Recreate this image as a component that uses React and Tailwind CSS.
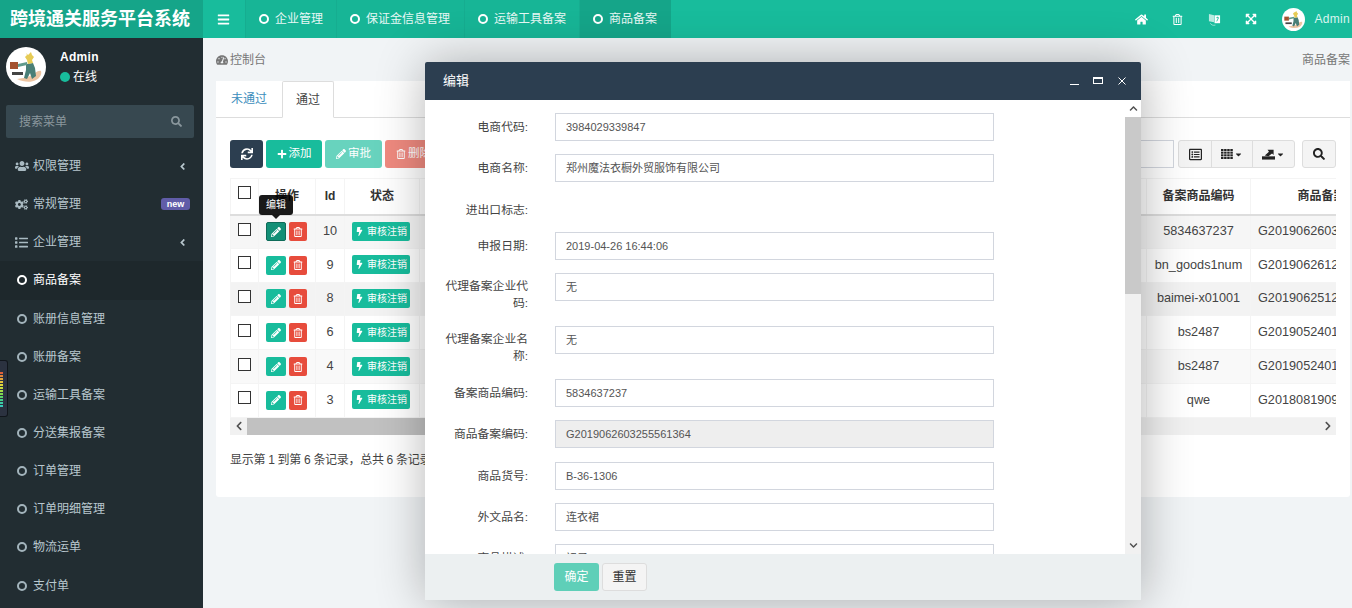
import React from 'react';
import {
  FaBars, FaHome, FaRegTrashAlt, FaExpandArrowsAlt, FaSearch, FaUsers, FaCogs, FaList, FaAngleLeft,
  FaTachometerAlt, FaSync, FaPlus, FaPencilAlt, FaBolt, FaRegListAlt,
  FaChevronUp, FaChevronDown, FaChevronLeft, FaChevronRight, FaCaretDown,
} from 'react-icons/fa';

const font = 'font-["Liberation_Sans","Noto_Sans_CJK_SC",sans-serif]';

const navTabs = [
  { label: '企业管理', w: 'w-[91px]' },
  { label: '保证金信息管理', w: 'w-[128px]' },
  { label: '运输工具备案', w: 'w-[115px]' },
  { label: '商品备案', w: 'w-[92px]', active: true },
];

const menu = [
  { label: '权限管理', icon: <FaUsers className="text-[14px]" />, arrow: true },
  { label: '常规管理', icon: <FaCogs />, badge: 'new' },
  { label: '企业管理', icon: <FaList className="text-[13px]" />, arrow: true },
  { label: '商品备案', active: true },
  { label: '账册信息管理' },
  { label: '账册备案' },
  { label: '运输工具备案' },
  { label: '分送集报备案' },
  { label: '订单管理' },
  { label: '订单明细管理' },
  { label: '物流运单' },
  { label: '支付单' },
];

const rows = [
  { id: 10, code: '5834637237', no: 'G2019062603255561364', bg: 'bg-[#f6f6f6]' },
  { id: 9, code: 'bn_goods1num', no: 'G2019062612255561364', bg: 'bg-white' },
  { id: 8, code: 'baimei-x01001', no: 'G2019062512255561364', bg: 'bg-[#f3f3f3]' },
  { id: 6, code: 'bs2487', no: 'G2019052401255561364', bg: 'bg-white' },
  { id: 4, code: 'bs2487', no: 'G2019052401255561365', bg: 'bg-[#f9f9f9]' },
  { id: 3, code: 'qwe', no: 'G2018081909255561364', bg: 'bg-white' },
];

const fields = [
  { label: '电商代码:', value: '3984029339847' },
  { label: '电商名称:', value: '郑州魔法衣橱外贸服饰有限公司' },
  { label: '进出口标志:', blank: true },
  { label: '申报日期:', value: '2019-04-26 16:44:06' },
  { label: '代理备案企业代码:', value: '无', tall: true },
  { label: '代理备案企业名称:', value: '无', tall: true },
  { label: '备案商品编码:', value: '5834637237' },
  { label: '商品备案编码:', value: 'G2019062603255561364', disabled: true },
  { label: '商品货号:', value: 'B-36-1306' },
  { label: '外文品名:', value: '连衣裙' },
  { label: '商品描述:', value: '裙子' },
];

const eqColors = ['#e0603a', '#e5843a', '#e5a53a', '#e5c23a', '#e0d83a', '#c6dc3c', '#a4dc44', '#80d850', '#5cd468', '#44d088', '#3ccca4', '#38c8b8'];

function Avatar({ className }) {
  return (
    <svg viewBox="0 0 40 40" className={className}>
      <circle cx="20" cy="20" r="20" fill="#fff" />
      <path d="M11 32c4-1 9-1 13-3 4-2 8-6 11-5 1 3-1 7-5 9-5 3-13 2-19-1z" fill="#eec5a2" />
      <path d="M20 17l7-1 2 5 1 8-4 3-2-6-3 6-3-1 2-8z" fill="#4a7f77" />
      <path d="M12 17l9-2v3l-9 2z" fill="#5f9a8c" />
      <path d="M20 6l2 2 3-3 1 3 2 2-2 3 1 3-5 1-1-4-2-3 2-2z" fill="#e6cb55" />
      <rect x="4" y="15" width="8" height="7" fill="#a4522f" />
      <rect x="6" y="25" width="11" height="3" fill="#444" />
    </svg>
  );
}

function TranslateIcon() {
  return (
    <svg viewBox="0 0 14 14" className="w-[13px] h-[13px]" fill="currentColor">
      <path d="M1 1l5.5 1.5V10L1 9z" opacity=".7" />
      <path d="M7 2.5h6V11H7z" />
      <path d="M9 5h2.6M10.3 4v1M9.4 9l1.8-3.6" stroke="#18bc9c" strokeWidth=".9" fill="none" />
      <path d="M2.5 11c1 2 3 2.6 5.5 2" stroke="currentColor" strokeWidth=".8" fill="none" opacity=".7" />
    </svg>
  );
}

function GridIcon() {
  const cells = [];
  for (let y = 0; y < 4; y++) {
    for (let x = 0; x < 4; x++) {
      cells.push(<rect key={`${x}-${y}`} x={x * 3.5} y={y * 3} width="2.8" height="2.3" />);
    }
  }
  return <svg viewBox="0 0 13.5 11.3" className="w-[12px] h-[10px]" fill="#222">{cells}</svg>;
}

function ExportIcon() {
  return (
    <svg viewBox="0 0 14 12" className="w-[13px] h-[12px]" fill="#222">
      <path d="M0 8.5h14V12H0z" />
      <path d="M3 7.5l4.5-4L6 1.5h6.5V7L10.8 5.4 7 8.5z" />
    </svg>
  );
}

function TopBar() {
  return (
    <header className="h-[38px] shrink-0 flex bg-[#18bc9c] text-white">
      <div className="w-[203px] shrink-0 bg-[#15a589] flex items-center justify-center pr-[3px] text-[18px] font-bold">
        跨境通关服务平台系统
      </div>
      <button className="w-[41px] mr-px flex items-center justify-center text-[13px]">
        <FaBars />
      </button>
      {navTabs.map(t => (
        <div
          key={t.label}
          className={`${t.w} flex items-center pl-[13px] gap-[6px] border-l border-[#16ad90] text-[12px] ${t.active ? 'bg-[#15a589]' : 'bg-[#17b596]'}`}
        >
          <span className="w-[10px] h-[10px] rounded-full border-2 border-white" />
          <span className="text-[#e6f8f5]">{t.label}</span>
        </div>
      ))}
      <div className="ml-auto flex items-center pr-[2px] text-[12px]">
        <span className="w-[36px] flex justify-center"><FaHome className="text-[13px]" /></span>
        <span className="w-[37px] flex justify-center"><FaRegTrashAlt className="text-[11px]" /></span>
        <span className="w-[36px] flex justify-center"><TranslateIcon /></span>
        <span className="w-[37px] flex justify-center"><FaExpandArrowsAlt className="text-[12px]" /></span>
        <Avatar className="w-[23px] h-[23px] ml-[13px]" />
        <span className="ml-[9px] text-[12px] text-[#d8f5ef] tracking-[0.3px]">Admin</span>
      </div>
    </header>
  );
}

function Sidebar() {
  return (
    <aside className="w-[203px] shrink-0 bg-[#222d32] overflow-hidden">
      <div className="h-[67px] flex pl-[6px] pt-[9px]">
        <Avatar className="w-[40px] h-[40px]" />
        <div className="ml-[14px] text-white text-[12px]">
          <div className="font-bold mt-px leading-[18px] tracking-[0.3px]">Admin</div>
          <div className="flex items-center gap-[3px] mt-[2px] leading-[18px]">
            <span className="w-[10px] h-[10px] rounded-full bg-[#18bc9c]" />
            在线
          </div>
        </div>
      </div>
      <div className="ml-[6px] w-[188px] h-[33px] bg-[#374850] rounded-[2px] flex items-center justify-between pl-[13px] pr-[12px] text-[12px] text-[#8a979d]">
        搜索菜单
        <FaSearch className="text-[11px]" />
      </div>
      <nav className="mt-[9px]">
        {menu.map(m => (
          <div
            key={m.label}
            className={`h-[38.15px] flex items-center text-[12px] ${m.active ? 'bg-[#1e282c] text-white' : 'text-[#b8c7ce]'}`}
          >
            {m.icon ? (
              <span className="w-[33px] pl-[15px] flex text-[13px] text-[#a9bac2]">{m.icon}</span>
            ) : (
              <span className={`ml-[17px] mr-[6px] w-[10px] h-[10px] rounded-full border-2 ${m.active ? 'border-white' : 'border-[#a3b4bc]'}`} />
            )}
            <span>{m.label}</span>
            {m.arrow && <FaAngleLeft className="ml-auto mr-[15px] text-[11px]" />}
            {m.badge && (
              <span className="ml-auto mr-[13px] w-[29px] h-[12px] rounded-[3px] bg-[#605ca8] text-white text-[9px] font-bold leading-[12px] text-center">
                {m.badge}
              </span>
            )}
          </div>
        ))}
      </nav>
    </aside>
  );
}

function ToolBtn({ className, children }) {
  return (
    <button className={`h-[28px] rounded-[3px] flex items-center justify-center gap-[2px] text-[11.5px] text-white ${className}`}>
      {children}
    </button>
  );
}

function GroupBtn({ className = '', children }) {
  return (
    <button className={`h-[28px] bg-[#f4f4f4] border border-[#ddd] flex items-center justify-center text-[#222] text-[12px] ${className}`}>
      {children}
    </button>
  );
}

function DataTable() {
  const th = 'border border-[#f4f4f4] border-b-2 border-b-[#ddd] text-center font-bold text-[12px] text-[#333] p-0';
  const td = 'border border-[#f4f4f4] text-center text-[12.7px] text-[#444] p-0 whitespace-nowrap';
  return (
    <div className="mt-[10px] overflow-hidden">
      <table className="table-fixed border-collapse w-[1186px]">
        <colgroup>
          <col className="w-[28px]" />
          <col className="w-[57px]" />
          <col className="w-[29px]" />
          <col className="w-[75px]" />
          <col className="w-[727px]" />
          <col className="w-[104px]" />
          <col className="w-[166px]" />
        </colgroup>
        <thead>
          <tr className="h-[36px]">
            <th className={th}>
              <input type="checkbox" className="appearance-none block mx-auto w-[13px] h-[13px] border border-[#333] bg-white -mt-[7px]" />
            </th>
            <th className={th}>操作</th>
            <th className={th}>Id</th>
            <th className={th}>状态</th>
            <th className={th} />
            <th className={th}>备案商品编码</th>
            <th className={th}>商品备案编码</th>
          </tr>
        </thead>
        <tbody>
          {rows.map((r, i) => (
            <tr key={r.id} className={`h-[33.8px] ${r.bg}`}>
              <td className={td}>
                <input type="checkbox" className="appearance-none block mx-auto w-[13px] h-[13px] border border-[#333] bg-white -mt-[5px]" />
              </td>
              <td className={`${td} pr-[2px]`}>
                <div className="flex justify-center gap-[3px]">
                  <span className={`w-[20px] h-[19px] rounded-[2px] flex items-center justify-center text-white text-[10px] ${i === 0 ? 'bg-[#128f76] border border-[#0e6b59]' : 'bg-[#18bc9c]'}`}>
                    <FaPencilAlt />
                  </span>
                  <span className="w-[18px] h-[19px] rounded-[2px] bg-[#e74c3c] flex items-center justify-center text-white text-[10px]">
                    <FaRegTrashAlt />
                  </span>
                </div>
              </td>
              <td className={td}>{r.id}</td>
              <td className={`${td} pr-[2px]`}>
                <span className="inline-flex items-center gap-[3px] w-[58px] h-[19px] justify-center rounded-[2px] bg-[#18bc9c] text-white text-[10px]">
                  <FaBolt className="text-[9px]" />审核注销
                </span>
              </td>
              <td className={td} />
              <td className={td}>{r.code}</td>
              <td className={`${td} text-left pl-[7px]`}>{r.no}</td>
            </tr>
          ))}
        </tbody>
      </table>
      <div className="h-[17px] bg-[#f1f1f1] flex items-center text-[10px] text-[#505050]">
        <span className="w-[17px] flex justify-center"><FaChevronLeft /></span>
        <span className="w-[880px] h-full bg-[#c1c1c1]" />
        <span className="ml-auto w-[17px] flex justify-center"><FaChevronRight /></span>
      </div>
    </div>
  );
}

function ContentArea() {
  return (
    <main className="flex-1 min-w-0 bg-[#f1f4f6] pl-[13px] pr-[2px] overflow-hidden">
      <div className="h-[43px] flex items-center justify-between text-[12px] text-[#777]">
        <span className="flex items-center gap-[2px]"><FaTachometerAlt className="text-[12px]" />控制台</span>
        <span>商品备案</span>
      </div>
      <section className="h-[416px] bg-white rounded-[3px]">
        <div className="h-[37px] flex border-b border-[#ddd] bg-white text-[12px]">
          <div className="w-[66px] flex items-center justify-center text-[#3c8dbc]">未通过</div>
          <div className="w-[52px] h-[37px] flex items-center justify-center text-[#444] bg-white border border-[#ddd] border-b-white rounded-t-[2px]">通过</div>
        </div>
        <div className="px-[14px] pt-[22px]">
          <div className="flex items-center h-[28px]">
            <ToolBtn className="w-[33px] bg-[#2c3e50]"><FaSync className="text-[12px]" /></ToolBtn>
            <ToolBtn className="w-[56px] ml-[3px] bg-[#18bc9c]"><FaPlus className="text-[10px]" />添加</ToolBtn>
            <ToolBtn className="w-[57px] ml-[3px] bg-[#18bc9c] opacity-65"><FaPencilAlt className="text-[10px]" />审批</ToolBtn>
            <ToolBtn className="w-[57px] ml-[3px] bg-[#e74c3c] opacity-65"><FaRegTrashAlt className="text-[10px]" />删除</ToolBtn>
            <div className="ml-auto w-[160px] h-[28px] border border-[#d2d6de]" />
            <div className="ml-[4px] flex">
              <GroupBtn className="w-[34px] rounded-l-[3px]"><FaRegListAlt className="text-[13px]" /></GroupBtn>
              <GroupBtn className="w-[42px] -ml-px gap-[1px]"><GridIcon /><FaCaretDown className="text-[9px]" /></GroupBtn>
              <GroupBtn className="w-[43px] -ml-px gap-[1px] rounded-r-[3px]"><ExportIcon /><FaCaretDown className="text-[9px]" /></GroupBtn>
            </div>
            <GroupBtn className="ml-[7px] w-[34px] rounded-[3px]"><FaSearch /></GroupBtn>
          </div>
          <DataTable />
          <p className="mt-[16px] text-[12px] tracking-[-0.3px] text-[#444]">显示第 1 到第 6 条记录，总共 6 条记录</p>
        </div>
      </section>
    </main>
  );
}

function FormRow({ f }) {
  const height = f.blank ? 'h-[22px] mb-[14px]' : f.tall ? 'h-[40px] mb-[13px]' : 'h-[28px] mb-[13.3px]';
  const labelText = f.tall ? 'pt-[5px] leading-[17px]' : f.blank ? 'pt-[3px] leading-[22px]' : 'leading-[28px]';
  return (
    <div className={`flex ${height}`}>
      <label className={`w-[88px] ml-[15px] shrink-0 text-right text-[11.8px] text-[#444] ${labelText}`}>
        {f.label}
      </label>
      {!f.blank && (
        <div className={`ml-[27px] w-[439px] h-[28px] border border-[#d2d6de] px-[10px] text-[11px] leading-[26px] text-[#555] ${f.disabled ? 'bg-[#eee]' : 'bg-white'}`}>
          {f.value}
        </div>
      )}
    </div>
  );
}

function EditModal() {
  return (
    <div className="absolute left-[425px] top-[62px] w-[716px] h-[538px] flex flex-col rounded-t-[2px] bg-white shadow-[1px_1px_50px_rgba(0,0,0,0.3)]">
      <div className="h-[38px] shrink-0 bg-[#2c3e50] rounded-t-[2px] flex items-center pl-[18px] pb-[1px] text-white text-[13px]">
        编辑
        <span className="ml-auto flex items-center pr-[15px]">
          <span className="w-[9px] h-px bg-white mt-[7px]" />
          <span className="ml-[14px] w-[10px] h-[7px] border border-white border-t-2 mt-[-1px]" />
          <svg viewBox="0 0 8 8" className="ml-[15px] w-[8px] h-[8px]" stroke="white" strokeWidth="1" fill="none">
            <path d="M0.5 0.5l7 7M7.5 0.5l-7 7" />
          </svg>
        </span>
      </div>
      <div className="flex-1 min-h-0 flex">
        <div className="flex-1 overflow-hidden pt-[13.2px]">
          {fields.map(f => <FormRow key={f.label} f={f} />)}
        </div>
        <div className="w-[16px] shrink-0 bg-[#f1f1f1] flex flex-col text-[#505050] text-[9px]">
          <span className="h-[17px] flex items-center justify-center bg-white"><FaChevronUp /></span>
          <span className="h-[177px] bg-[#c9c9c9]" />
          <span className="mt-auto h-[17px] flex items-center justify-center"><FaChevronDown /></span>
        </div>
      </div>
      <div className="h-[46px] shrink-0 bg-[#ecf0f1] flex items-center pl-[129px] gap-[3px] text-[12px]">
        <button className="w-[45px] h-[28px] rounded-[3px] bg-[#5fcfb8] text-white">确定</button>
        <button className="w-[45px] h-[28px] rounded-[3px] bg-[#f4f4f4] border border-[#ddd] text-[#333]">重置</button>
      </div>
    </div>
  );
}

export default function App() {
  return (
    <div className={`relative w-[1352px] h-[608px] overflow-hidden flex flex-col ${font}`}>
      <TopBar />
      <div className="flex flex-1 min-h-0">
        <Sidebar />
        <ContentArea />
      </div>
      {/* little equalizer widget stuck on the left edge */}
      <div className="absolute left-0 top-[360px] w-[8px] h-[57px] rounded-r-[3px] bg-[#2b3240] border border-l-0 border-[#11161c] pt-[11px] flex flex-col gap-px">
        {eqColors.map(c => (
          <span key={c} className="block w-[3px] h-[2px]" style={{ backgroundColor: c }} />
        ))}
      </div>
      <div className="absolute left-[259px] top-[195px] w-[34px] h-[20px] rounded-[3px] bg-black/90 text-white text-[10px] leading-[20px] text-center">
        编辑
        <span className="absolute left-[13px] top-[20px] w-0 h-0 border-x-[4px] border-x-transparent border-t-[4px] border-t-black/90" />
      </div>
      <EditModal />
    </div>
  );
}
